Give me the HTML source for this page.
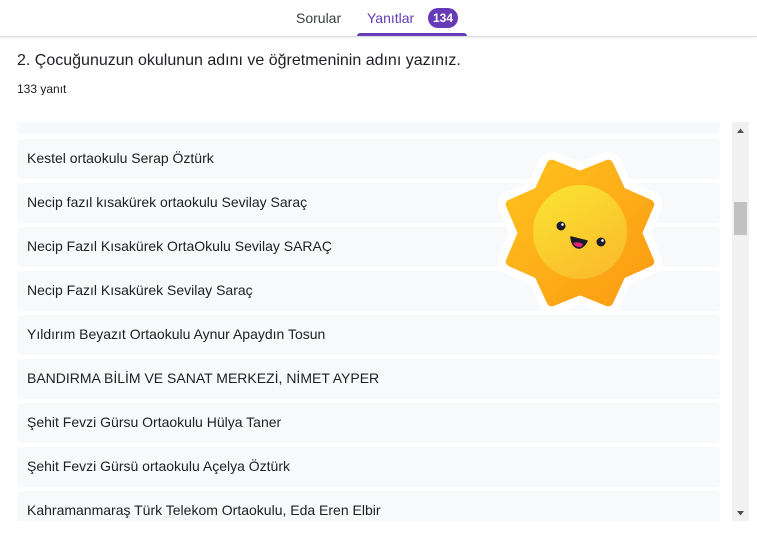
<!DOCTYPE html>
<html><head><meta charset="utf-8"><style>
*{margin:0;padding:0;box-sizing:border-box}
body{width:757px;height:545px;overflow:hidden;background:#fff;font-family:"Liberation Sans",Arial,sans-serif;position:relative;color:#202124}
.hdr{position:absolute;left:0;top:0;width:757px;height:37px;border-bottom:1px solid #dadce0;box-shadow:0 1px 2px rgba(0,0,0,.08)}
.t{position:absolute;top:10px;font-size:14px;}
.badge{position:absolute;left:428px;top:8px;width:30px;height:20px;border-radius:10px;background:#673ab7;color:#fff;font-size:12px;font-weight:bold;text-align:center;line-height:20px}
.ul{position:absolute;left:357px;top:33px;width:110px;height:3px;background:#673ab7;border-radius:3px 3px 0 0}
.title{position:absolute;left:17px;top:52px;font-size:16px}
.cnt{position:absolute;left:17px;top:82px;font-size:12px}
.row{position:absolute;left:17px;width:703px;height:40px;background:#f8f9fa;border-radius:4px;font-size:14px;padding-left:10px;line-height:38px}
.sb{position:absolute;left:732px;top:122px;width:17px;height:399px;background:#f1f1f1}
.th{position:absolute;left:734px;top:202px;width:13px;height:33px;background:#c1c1c1}
</style></head><body>
<div class="hdr">
<div class="t" style="left:296px;color:#3c4043">Sorular</div>
<div class="t" style="left:367px;color:#673ab7">Yanıtlar</div>
<div class="badge">134</div>
<div class="ul"></div>
</div>
<div class="title">2. Çocuğunuzun okulunun adını ve öğretmeninin adını yazınız.</div>
<div class="cnt">133 yanıt</div>
<div class="row" style="top:95px;height:39px"></div>
<div style="position:absolute;left:0;top:95px;width:757px;height:27px;background:#fff"></div>
<div class="row" style="top:139px">Kestel ortaokulu Serap Öztürk</div>
<div class="row" style="top:183px">Necip fazıl kısakürek ortaokulu Sevilay Saraç</div>
<div class="row" style="top:227px">Necip Fazıl Kısakürek OrtaOkulu Sevilay SARAÇ</div>
<div class="row" style="top:271px">Necip Fazıl Kısakürek Sevilay Saraç</div>
<div class="row" style="top:315px">Yıldırım Beyazıt Ortaokulu Aynur Apaydın Tosun</div>
<div class="row" style="top:359px">BANDIRMA BİLİM VE SANAT MERKEZİ, NİMET AYPER</div>
<div class="row" style="top:403px">Şehit Fevzi Gürsu Ortaokulu Hülya Taner</div>
<div class="row" style="top:447px">Şehit Fevzi Gürsü ortaokulu Açelya Öztürk</div>
<div class="row" style="top:491px">Kahramanmaraş Türk Telekom Ortaokulu, Eda Eren Elbir</div>
<div style="position:absolute;left:0;top:521px;width:757px;height:24px;background:#fff"></div>
<div class="sb"></div><div class="th"></div>
<svg style="position:absolute;left:732px;top:122px" width="17" height="399"><path d="M5 11 L8.5 6.5 L12 11Z" fill="#505050"/><path d="M5 389 L8.5 393.5 L12 389Z" fill="#505050"/></svg>
<svg style="position:absolute;left:0;top:0" width="757" height="545">
<defs>
<linearGradient id="o" x1="0" y1="0" x2="1" y2="1"><stop offset="0" stop-color="#ffc21d"/><stop offset="1" stop-color="#fb9a12"/></linearGradient>
<linearGradient id="c" x1="0" y1="0" x2="0.6" y2="1"><stop offset="0" stop-color="#f9e631"/><stop offset="1" stop-color="#fbbd2c"/></linearGradient>
<polygon id="s" points="580,176 608.3,164.6 621,191.9 649.2,204.4 637,233 649.2,261.6 621,274.1 608.3,301.4 580,290 551.7,301.4 539,274.1 510.8,261.6 523,233 510.8,204.4 539,191.9 551.7,164.6"/>
</defs>
<use href="#s" fill="#fff" stroke="#fff" stroke-width="26" stroke-linejoin="round"/>
<use href="#s" fill="url(#o)" stroke="url(#o)" stroke-width="10" stroke-linejoin="round"/>
<circle cx="580" cy="232" r="47" fill="url(#c)"/>
<circle cx="561" cy="226" r="4.5" fill="#1d1a2a"/><circle cx="562.5" cy="224.5" r="1.3" fill="#fff"/>
<circle cx="601" cy="242" r="4.5" fill="#1d1a2a"/><circle cx="602.5" cy="240.5" r="1.3" fill="#fff"/>
<path d="M571 237 Q572 248 580 248 Q585 246 587 241 Z" fill="#1d1a2a" stroke="#1d1a2a" stroke-width="1.5" stroke-linejoin="round"/>
<path d="M573 243 Q576 248 581 247 Q583 245 583 244 Q578 241 573 243Z" fill="#e8227a"/>
</svg>
</body></html>
